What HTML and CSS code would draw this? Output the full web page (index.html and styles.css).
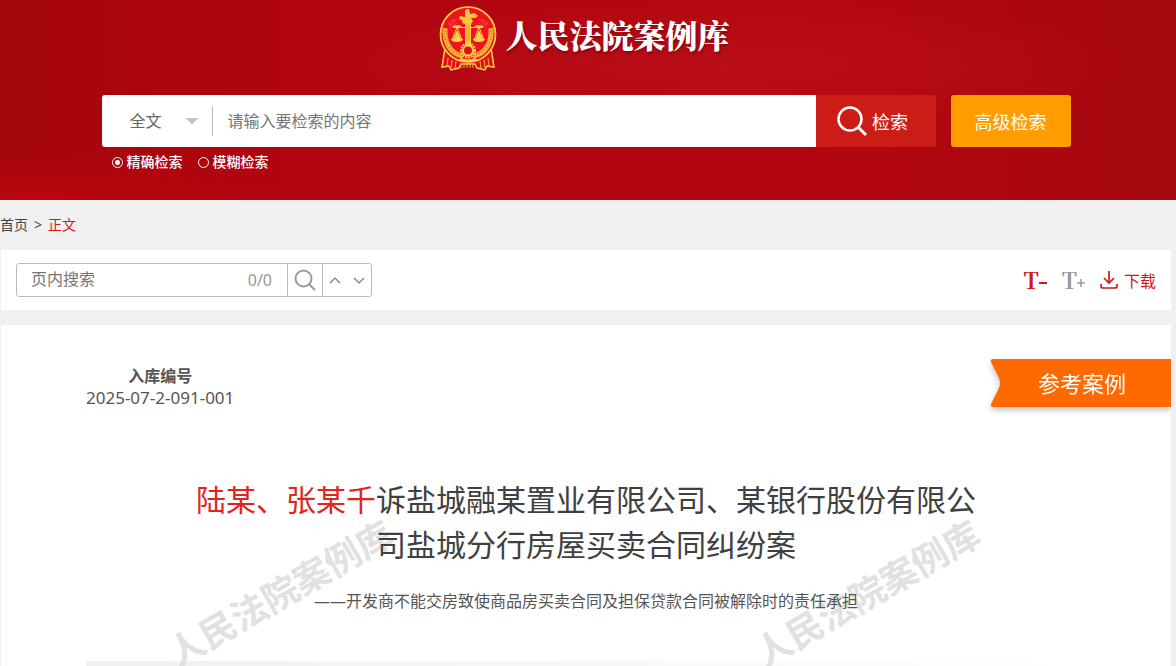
FILE: index.html
```html
<!DOCTYPE html>
<html lang="zh-CN">
<head>
	<meta charset="utf-8">
	<meta name="viewport" content="width=device-width, initial-scale=1">
	<title>人民法院案例库</title>
	<link rel="stylesheet" href="styles.css">
</head>
<body>
	<header class="header">
		<div class="logo">
			<svg class="emblem" viewBox="0 0 58 66" aria-hidden="true">
				<path d="M6 42L3 61l7-1 2 4 8-2 2-4h14l2 4 8 2 2-4 7 1-3-19z" fill="#e50f1c" stroke="#f8d444" stroke-width="1.5"/>
				<path d="M9 52l-1 8M13 54l-1 8M17 55l-1 8M49 52l1 8M45 54l1 8M41 55l1 8M22 57v5M25 57v5M28 57v5M31 57v5M34 57v5" stroke="#f8b33c" stroke-width="1"/>
				<circle cx="29" cy="28.5" r="27.5" fill="#f01322" stroke="#f8d444" stroke-width="1.7"/>
				<path d="M9 18l6-5M10 20l8-7M11 22l7-5M49 18l-6-5M48 20l-8-7M47 22l-7-5" stroke="#f0583a" stroke-width="1"/>
				<path d="M6 22C5 37 12 48 24 50M52 22C53 37 46 48 34 50" fill="none" stroke="#f3b63a" stroke-width="5"/>
				<path d="M5 24C5 37 12 47 24 50M53 24C53 37 46 47 34 50M7 22C7 35 13 45 24 49M51 22C51 35 45 45 34 49" fill="none" stroke="#e8381f" stroke-width="1" stroke-dasharray="1 2"/>
				<path d="M26 4.500L28 3h2l1 5 5-1 3 3-3 2h-4l2 3-2 3v22h-6V18l-3-1 1-2-4-2 1-3 5 1z" fill="#f8c83c"/>
				<path d="M14 20l6-1 3 2h12l3-2 6 1v2H14z" fill="#f8d444"/>
				<path d="M18 21l-5 13M18 21l5 13M40 21l-5 13M40 21l5 13" stroke="#f8d444" stroke-width="1"/>
				<path d="M18 24l4 9h-8zM40 24l4 9h-8z" fill="#f8d444"/>
				<path d="M12 33h12c0 4-12 4-12 0zM34 33h12c0 4-12 4-12 0z" fill="#f8d444"/>
				<path d="M28 17v18M30 19v16" stroke="#ee9a34" stroke-width="1"/>
				<circle cx="29" cy="44.5" r="7" fill="none" stroke="#f8d444" stroke-width="2" stroke-dasharray="2 1"/>
				<circle cx="29" cy="44.5" r="5" fill="#e9101f" stroke="#f8d444" stroke-width="2"/>
				<circle cx="29" cy="44.5" r="2.5" fill="#d9101b"/>
				<path d="M21 53q8 3 16 0" fill="none" stroke="#f8d444" stroke-width="2"/>
			</svg>
			<h1 class="logo-text">人民法院案例库</h1>
		</div>
		<form class="search">
			<div class="search-row">
				<div class="search-box">
					<select class="search-type" aria-label="检索范围">
						<option>全文</option>
					</select>
					<input class="search-input" type="text" placeholder="请输入要检索的内容" aria-label="检索内容">
				</div>
				<button class="btn btn-search" type="submit">
					<svg width="32" height="32" viewBox="0 0 32 32" fill="none" stroke="#fff" aria-hidden="true">
						<circle cx="14" cy="14" r="11.5" stroke-width="2.5"/>
						<path d="M22 22l8 8" stroke-width="3"/>
					</svg>
					检索
				</button>
				<button class="btn btn-advanced" type="button">高级检索</button>
			</div>
			<div class="search-mode">
				<label><input type="radio" name="mode" checked>精确检索</label>
				<label><input type="radio" name="mode">模糊检索</label>
			</div>
		</form>
	</header>

	<nav class="crumbs">
		<a href="#">首页</a>
		<span>&gt;</span>
		<a class="current" href="#">正文</a>
	</nav>

	<div class="toolbar">
		<div class="find">
			<input class="find-input" type="text" placeholder="页内搜索" aria-label="页内搜索">
			<span class="find-count">0/0</span>
			<button class="find-btn" type="button" aria-label="搜索">
				<svg width="22" height="22" viewBox="0 0 22 22" fill="none" stroke="#999" aria-hidden="true">
					<circle cx="9.5" cy="9.5" r="8" stroke-width="2"/>
					<path d="M15 15l6 6" stroke-width="2"/>
				</svg>
			</button>
			<div class="find-nav">
				<button type="button" aria-label="上一个">
					<svg width="12" height="8" viewBox="0 0 12 8" fill="none" stroke="#777" stroke-width="1.2" aria-hidden="true"><path d="M1 7l5-5 5 5"/></svg>
				</button>
				<button type="button" aria-label="下一个">
					<svg width="12" height="8" viewBox="0 0 12 8" fill="none" stroke="#777" stroke-width="1.2" aria-hidden="true"><path d="M1 2l5 5 5-5"/></svg>
				</button>
			</div>
		</div>
		<div class="tools">
			<button class="font-btn red" type="button" aria-label="缩小字号">T<svg width="8" height="8" viewBox="0 0 8 8" stroke="currentColor" stroke-width="2" aria-hidden="true"><path d="M0 4h8"/></svg></button>
			<button class="font-btn" type="button" aria-label="放大字号">T<svg width="8" height="8" viewBox="0 0 8 8" stroke="currentColor" stroke-width="1.5" aria-hidden="true"><path d="M0 4h8M4 0v8"/></svg></button>
			<button class="download red" type="button">
				<svg width="18" height="18" viewBox="0 0 18 18" fill="none" stroke="currentColor" stroke-width="1.7" aria-hidden="true">
					<path d="M9 0v12M4 7l5 5 5-5M1 13v2q0 2 2 2h12q2 0 2-2v-2"/>
				</svg>
				下载
			</button>
		</div>
	</div>

	<main class="case">
		<div class="watermark" aria-hidden="true">
			<span>人民法院案例库</span>
			<span>人民法院案例库</span>
		</div>
		<div class="ribbon">
			<svg viewBox="0 0 12 48" width="12" height="48" aria-hidden="true"><path d="M12 0H3Q0 0 1 3l8 16q2 5 0 10L1 45q-1 3 2 3h9z" fill="#ff6a00"/></svg>
			<span>参考案例</span>
		</div>
		<div class="case-no">
			<strong>入库编号</strong>
			<span class="number">2025-07-2-091-001</span>
		</div>
		<h2 class="case-title"><em>陆某、张某千</em>诉盐城融某置业有限公司、某银行股份有限公司盐城分行房屋买卖合同纠纷案</h2>
		<p class="case-subtitle">——开发商不能交房致使商品房买卖合同及担保贷款合同被解除时的责任承担</p>
		<div class="section-bar"></div>
	</main>
</body>
</html>
```
FILE: styles.css
```css
* {
	margin: 0;
	padding: 0;
	box-sizing: border-box;
}
body {
	display: flex;
	flex-direction: column;
	min-height: 100vh;
	background-color: #f0f0f0;
	color: #444;
	font-family: "Noto Sans", "Noto Sans CJK SC", sans-serif;
	font-size: 16px;
}
button, input, select {
	font: inherit;
	color: inherit;
	border: 0;
	outline: none;
	background: none;
}
button {
	cursor: pointer;
}
a {
	color: inherit;
	text-decoration: none;
}
.red {
	color: #d0191b;
}

/* header */
.header {
	height: 200px;
	padding: 6px 5px 0 1px;
	background:
		radial-gradient(ellipse 300px 50px at 0 100%, rgba(205,5,15,.5), transparent),
		radial-gradient(ellipse 420px 70px at 720px 65px, rgba(195,22,32,.5), transparent),
		linear-gradient(90deg, #a4060e, #b1050f 25%, #b20610 75%, #a5080f);
}
.logo {
	display: flex;
	justify-content: center;
	gap: 8px;
	height: 66px;
	padding-right: 3px;
}
.emblem {
	width: 58px;
	height: 66px;
}
.logo-text {
	color: #fff;
	font-family: "Noto Serif CJK SC", "Noto Sans CJK SC", serif;
	font-size: 32px;
	font-weight: 900;
	line-height: 56px;
	text-shadow: 1px 2px 3px rgba(80,0,0,.5);
}
.search {
	max-width: 969px;
	margin: 23px auto 0;
}
.search-row {
	display: flex;
	height: 52px;
}
.search-box {
	flex: 1;
	display: flex;
	align-items: center;
	background-color: #fff;
	border-radius: 3px 0 0 3px;
}
.search-type {
	width: 111px;
	height: 30px;
	padding-left: 28px;
	appearance: none;
	color: #666;
	border-right: 1px solid #bbb;
	background:
		linear-gradient(to bottom left, #c4c4c4 50%, transparent 0) no-repeat 84px 12px / 6px 7px,
		linear-gradient(to bottom right, #c4c4c4 50%, transparent 0) no-repeat 90px 12px / 6px 7px;
}
.search-input {
	flex: 1;
	min-width: 0;
	height: 52px;
	padding: 0 15px;
}
.search-input::placeholder, .find-input::placeholder {
	color: #757575;
}
.btn {
	display: flex;
	align-items: center;
	justify-content: center;
	gap: 4px;
	width: 120px;
	color: #fff;
	font-size: 18px;
}
.btn-search {
	padding-right: 7px;
	background-color: #cc1c17;
	border-radius: 0 3px 3px 0;
}
.btn-advanced {
	margin-left: 15px;
	background-color: #ff9c00;
	border-radius: 3px;
}
.search-mode {
	display: flex;
	gap: 15px;
	padding: 5px 10px;
	color: #fff;
	font-size: 14px;
	font-weight: 500;
	line-height: 20px;
}
.search-mode label {
	display: flex;
	align-items: center;
	gap: 4px;
}
.search-mode input {
	width: 11px;
	height: 11px;
	appearance: none;
	border: 1px solid #fff;
	border-radius: 50%;
}
.search-mode input:checked {
	background: radial-gradient(circle, #fff 2px, transparent 3px);
}

/* breadcrumb */
.crumbs {
	display: flex;
	align-items: center;
	gap: 6px;
	height: 50px;
	padding-bottom: 2px;
	font-size: 14px;
}
.crumbs .current {
	color: #d9150f;
}

/* in-page search */
.toolbar {
	display: flex;
	align-items: center;
	justify-content: space-between;
	height: 60px;
	margin: 0 5px 15px 1px;
	padding: 0 15px;
	background-color: #fff;
}
.find {
	display: flex;
	align-items: center;
	width: 356px;
	height: 34px;
	border: 1px solid #bbb;
	border-radius: 3px;
}
.find-input {
	flex: 1;
	min-width: 0;
	height: 32px;
	padding: 0 0 2px 14px;
}
.find-count {
	padding-right: 15px;
	color: #999;
}
.find-btn {
	display: flex;
	align-items: center;
	justify-content: center;
	width: 36px;
	height: 32px;
	border: 1px solid #bbb;
	border-width: 0 1px;
}
.find-nav {
	display: flex;
	justify-content: center;
	gap: 12px;
	width: 48px;
}
.find-nav button {
	display: flex;
}
.tools {
	display: flex;
	align-items: center;
	gap: 15px;
}
.font-btn {
	display: flex;
	align-items: center;
	color: #999;
	font-family: "Noto Serif CJK SC", serif;
	font-size: 22px;
	font-weight: bold;
	line-height: 30px;
}
.font-btn.red {
	color: #d0191b;
}
.font-btn svg {
	margin-top: 5px;
}
.download {
	display: flex;
	align-items: center;
	gap: 6px;
}

/* case card */
.case {
	position: relative;
	flex: 1;
	display: flex;
	flex-direction: column;
	margin: 0 5px 0 1px;
	padding: 41px 85px 0;
	background-color: #fff;
	overflow: hidden;
}
.watermark {
	position: absolute;
	top: 242px;
	left: -14px;
	right: 10px;
	display: flex;
	color: #e1e1e1;
	font-size: 36px;
	font-weight: bold;
	line-height: 54px;
	text-align: center;
}
.watermark span {
	flex: 1;
	transform: rotate(-30deg);
}
.ribbon {
	position: absolute;
	top: 34px;
	right: 0;
	display: flex;
	width: 181px;
	color: #fff;
	font-size: 22px;
	line-height: 48px;
	filter: drop-shadow(0 3px 3px rgba(0,0,0,.25));
}
.ribbon span {
	flex: 1;
	padding-left: 36px;
	background-color: #ff6a00;
}
.case-no {
	display: flex;
	flex-direction: column;
	align-self: flex-start;
	align-items: center;
	color: #555;
	line-height: 21px;
}
.number {
	font-size: 17px;
}
.case-title {
	position: relative;
	max-width: 800px;
	margin: 69px auto 0;
	padding: 0 10px;
	color: #404040;
	font-size: 30px;
	font-weight: normal;
	line-height: 45px;
	text-align: center;
}
.case-title em {
	color: #e1251b;
	font-style: normal;
}
.case-subtitle {
	position: relative;
	margin: 22px 0 48px;
	color: #555;
	line-height: 24px;
	text-align: center;
}
.section-bar {
	flex: 1;
	background: linear-gradient(90deg, #f0f0f0, #fff);
}
```
